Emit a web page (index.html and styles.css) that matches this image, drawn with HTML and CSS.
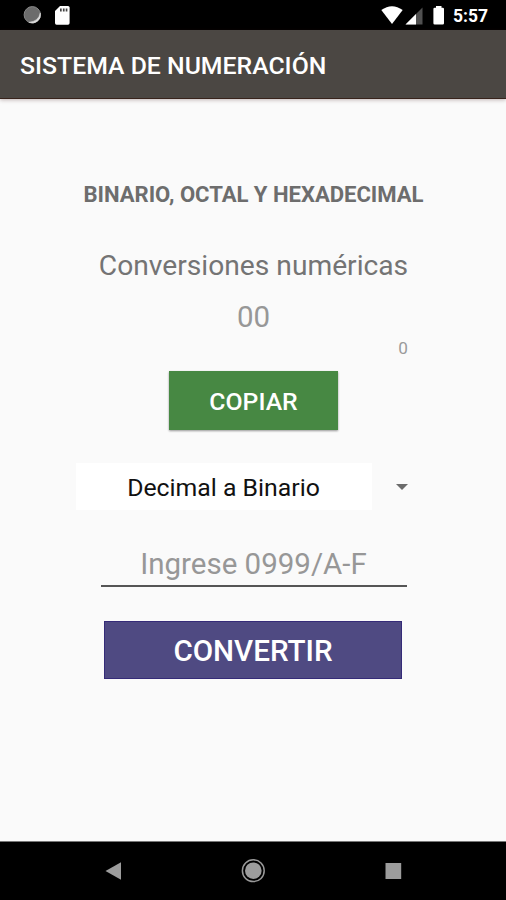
FILE: index.html
```html
<!DOCTYPE html>
<html lang="es">
<head>
<meta charset="utf-8">
<title>Sistema de numeración</title>
<link rel="stylesheet" href="styles.css">
</head>
<body>
<div class="screen">
  <div class="status">
    <svg class="status-left" width="80" height="30" viewBox="0 0 80 30">
      <circle cx="32.3" cy="14.800" r="8.200" fill="#6c6c6c" stroke="#888" stroke-width="1"/>
      <path d="M40.300 13a8.300 8.300 0 0 1-11.500 9.300Q38.500 21.500 40.300 13z" fill="#ddd" stroke="#ddd" stroke-width=".5"/>
      <path d="M60 6h8a1.600 1.600 0 0 1 1.600 1.600v15.500a1.600 1.600 0 0 1-1.600 1.600H56.600a1.600 1.600 0 0 1-1.600-1.600V11z" fill="#fff"/>
      <path d="M60 8.500h1.700v3H60zM62.900 8.500h1.700v3h-1.700zM65.700 8.500h1.700v3h-1.700z" fill="#444"/>
    </svg>
    <svg class="status-right" width="70" height="30" viewBox="378 0 70 30">
      <path d="M381.300 10Q392 2.300 402.700 10L392 24z" fill="#fff"/>
      <path d="M422.500 7.500V24.500H405.500z" fill="#505050"/>
      <path d="M416 14V24.500H405.500z" fill="#fff"/>
      <path d="M436 6h5.500v1.700h1.200a1.300 1.300 0 0 1 1.300 1.300v14.200a1.300 1.300 0 0 1-1.300 1.300h-8a1.300 1.300 0 0 1-1.300-1.300V9a1.300 1.300 0 0 1 1.300-1.300h1.300z" fill="#fff"/>
    </svg>
    <span class="clock">5:57</span>
  </div>
  <header class="appbar"><h1>SISTEMA DE NUMERACIÓN</h1></header>
  <main>
    <h2>BINARIO, OCTAL Y HEXADECIMAL</h2>
    <p class="subtitle">Conversiones numéricas</p>
    <p class="result">00</p>
    <p class="count">0</p>
    <button class="copy">COPIAR</button>
    <div class="spinner">
      <div class="choice">Decimal a Binario</div>
      <svg width="12" height="6" viewBox="0 0 12 6"><path d="M0 0h12L6 6z" fill="#6b6b6b"/></svg>
    </div>
    <div class="field">Ingrese 0999/A-F</div>
    <button class="convert">CONVERTIR</button>
  </main>
  <nav>
    <svg width="506" height="58" viewBox="0 842 506 58">
      <path d="M105.500 871L121 862.300V879.700z" fill="#9c9c9c"/>
      <circle cx="253.300" cy="870.700" r="10.900" fill="none" stroke="#999" stroke-width="1.500"/>
      <circle cx="253.300" cy="870.700" r="8.300" fill="#9c9c9c"/>
      <path d="M385.500 863h15.700v16h-15.700z" fill="#9c9c9c"/>
    </svg>
  </nav>
</div>
</body>
</html>
```
FILE: styles.css
```css
* { box-sizing: border-box; margin: 0; padding: 0; }
body { font-family: Roboto, "Liberation Sans", sans-serif; background: #fafafa; }
.screen { width: 506px; height: 900px; display: flex; flex-direction: column; overflow: hidden; }
.status { height: 30px; background: #000; display: flex; flex: none; }
.status-right { margin-left: 298px; }
.clock { margin-left: 5px; color: #fff; font-size: 17.5px; font-weight: 700; line-height: 33px; white-space: nowrap; }
.appbar { height: 69px; flex: none; background: #4b4743; border-bottom: 1px solid #38241c; padding-left: 20px; box-shadow: 0 1px 4px rgba(60, 20, 20, .3); }
h1 { color: #fff; font-size: 24.8px; font-weight: 500; line-height: 71px; white-space: nowrap; }
main { flex: 1; display: flex; flex-direction: column; align-items: center; padding: 80px 0 0 1px; }
h2 { font-size: 22.1px; font-weight: 700; line-height: 30px; color: #6d6d6d; letter-spacing: -.04px; white-space: nowrap; }
.subtitle { margin-top: 37px; font-size: 28.2px; line-height: 40px; color: #747474; white-space: nowrap; }
.result { margin-top: 11px; font-size: 29.5px; line-height: 40px; color: #979797; }
.count { width: 309px; margin-top: 0; text-align: right; font-size: 17.2px; line-height: 22px; color: #9a9a9a; }
button { border: 0; border-radius: 0; color: #fff; font-family: inherit; font-weight: 500; }
.copy { width: 169px; height: 59px; margin-top: 12px; padding-top: 2px; background: #478843; font-size: 24.8px; line-height: 57px; box-shadow: 0 1px 2px rgba(0, 0, 0, .4); }
.spinner { width: 354px; height: 47px; margin: 33px 2px 0 0; display: flex; align-items: center; }
.choice { width: 296px; height: 47px; margin-right: 24px; background: #fff; color: #111; font-size: 24.8px; line-height: 49px; text-align: center; white-space: nowrap; }
.field { width: 306px; height: 49px; margin-top: 28px; border-bottom: 2px solid #555; font-size: 29.5px; line-height: 52px; color: #979797; text-align: center; white-space: nowrap; }
.convert { width: 298px; height: 58px; margin: 34px 1px 0 0; padding-top: 2px; background: #4f4a82; border: 1px solid #352b78; font-size: 29.6px; line-height: 54px; }
nav { height: 59px; flex: none; background: #000; border-top: 1px solid #777; }
nav svg, .status svg { display: block; flex: none; }
```
